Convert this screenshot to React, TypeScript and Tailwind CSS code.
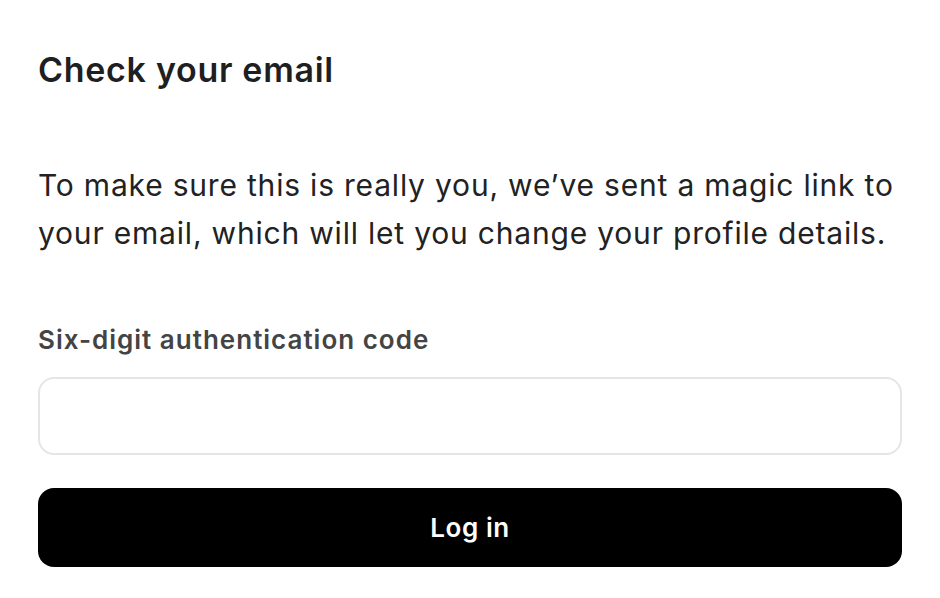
export default function App() {
  return (
    <div className="min-h-screen bg-white px-[38px] pt-[50px] font-['Inter',sans-serif]">
      <h1 className="text-[34px] font-semibold leading-[40px] tracking-[0.7px] text-[#1f1f1f]">
        Check your email
      </h1>

      <p className="mt-[71px] text-[30px] leading-[48px] tracking-[0.8px] text-[#222222]">
        To make sure this is really you, we’ve sent a magic link to your email,
        which will let you change your profile details.
      </p>

      <form className="mt-[65px] flex flex-col" onSubmit={(e) => e.preventDefault()}>
        <label
          htmlFor="code"
          className="text-[26px] font-semibold leading-[36px] tracking-[1px] text-[#444444]"
        >
          Six-digit authentication code
        </label>
        <input
          id="code"
          type="text"
          inputMode="numeric"
          className="mt-[19px] h-[78px] w-full rounded-[16px] border-2 border-[#e5e5e5] px-5 text-[26px] outline-none"
        />
        <button
          type="submit"
          className="mt-[33px] h-[79px] w-full rounded-[16px] bg-black text-[26px] font-semibold tracking-[0.6px] text-white"
        >
          Log in
        </button>
      </form>
    </div>
  );
}
